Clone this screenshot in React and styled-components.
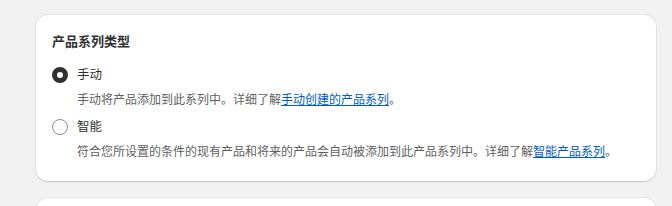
import styled, { createGlobalStyle } from "styled-components";

const GlobalStyle = createGlobalStyle`
  body {
    margin: 0;
    background: #f1f1f1;
    font-family: "Inter", "Noto Sans CJK SC", sans-serif;
    color: #303030;
  }
`

const Page = styled.div`
  display: flex;
  flex-direction: column;
  gap: 17px;
  padding: 15px 16px 0 36px;
`

const Card = styled.div`
  background: #fff;
  border-radius: 12px;
  padding: 16px 16px 19px;
  box-shadow: 0 1px 1px rgba(0, 0, 0, 0.12), 0 0 0 1px rgba(0, 0, 0, 0.05);
  min-height: ${({ $empty }) => ($empty ? "60px" : "auto")};
`

const Title = styled.h2`
  margin: 0 0 14px;
  font-size: 13px;
  line-height: 20px;
  font-weight: 600;
  color: #303030;
`

const Choices = styled.div`
  display: flex;
  flex-direction: column;
  gap: 7px;
`

const Choice = styled.div`
  display: flex;
  flex-direction: column;
  gap: 5px;
`

const Row = styled.label`
  display: flex;
  align-items: center;
  gap: 9px;
  font-size: 12.5px;
  line-height: 20px;
  color: #303030;
`

const Radio = styled.span`
  box-sizing: border-box;
  width: 16px;
  height: 16px;
  border-radius: 50%;
  flex: none;
  background: #fff;
  border: ${({ $checked }) => ($checked ? "5px solid #303030" : "1px solid #8a8a8a")};
`

const Help = styled.p`
  margin: 0 0 0 25px;
  font-size: 12px;
  line-height: 20px;
  color: #616161;
`

const Link = styled.a`
  color: #005bd3;
  text-decoration: underline;
`

const App = () => {
  return (
    <>
      <GlobalStyle />
      <Page>
        <Card>
          <Title>产品系列类型</Title>
          <Choices>
            <Choice>
              <Row>
                <Radio $checked />
                手动
              </Row>
              <Help>
                手动将产品添加到此系列中。详细了解<Link>手动创建的产品系列</Link>。
              </Help>
            </Choice>
            <Choice>
              <Row>
                <Radio />
                智能
              </Row>
              <Help>
                符合您所设置的条件的现有产品和将来的产品会自动被添加到此产品系列中。详细了解<Link>智能产品系列</Link>。
              </Help>
            </Choice>
          </Choices>
        </Card>
        <Card $empty />
      </Page>
    </>
  );
}

export default App;
